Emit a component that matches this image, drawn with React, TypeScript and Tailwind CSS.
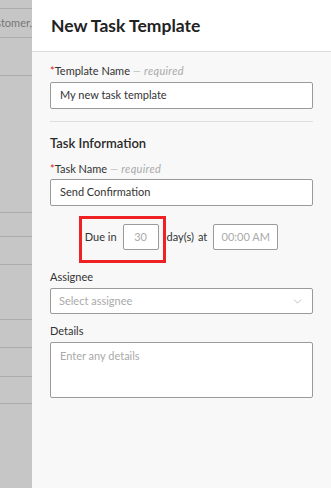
import React from "react";
import { ChevronDown } from "lucide-react";

const font = { fontFamily: "Lato, 'Open Sans', sans-serif" };

export default function App() {
  return (
    <div className="flex h-[488px] w-[331px] overflow-hidden" style={font}>
      {/* background list strip */}
      <div className="flex w-[32px] shrink-0 flex-col bg-[#c6c6c6]">
        <div className="h-[9px] border-b border-[#adadad]" />
        <div className="flex h-[29px] items-center justify-end overflow-hidden whitespace-nowrap border-b border-[#adadad] text-[11px] text-[#777]">
          customer,
        </div>
        <div className="h-[38px] border-b border-[#adadad]" />
        <div className="h-[137px] border-b border-[#adadad]" />
        <div className="h-[24px] border-b border-[#adadad]" />
        <div className="h-[28px] border-b border-[#adadad]" />
        <div className="h-[55px] border-b border-[#adadad]" />
        <div className="h-[28px] border-b border-[#adadad]" />
        <div className="h-[29px] border-b border-[#adadad]" />
        <div className="h-[27px] border-b border-[#adadad]" />
      </div>

      {/* side panel */}
      <div className="flex flex-1 flex-col bg-[#f8f8f8]">
        <div className="flex h-[52px] items-center border-b border-[#dcdcdc] bg-white pl-[19px] pt-[1px]">
          <h1 className="text-[17.5px] font-bold text-[#222]">New Task Template</h1>
        </div>

        <div className="flex flex-col px-[18px] pt-[12px]">
          <label className="h-[14px] text-[11px] leading-[14px] text-[#333]">
            <span className="text-[#d22]">*</span>Template Name{" "}
            <span className="italic tracking-[0.3px] text-[#aaa]">— required</span>
          </label>
          <div className="mt-[4px] flex h-[27px] items-center rounded-[2px] border border-[#9a9a9a] bg-white px-[9px] text-[11px] text-[#333]">
            My new task template
          </div>

          <div className="mt-[12px] h-px bg-[#dedede]" />

          <h2 className="mt-[12px] h-[18px] text-[13px] font-semibold leading-[18px] text-[#2a2a2a]">
            Task Information
          </h2>

          <label className="mt-[10px] h-[14px] text-[11px] leading-[14px] text-[#333]">
            <span className="text-[#d22]">*</span>Task Name{" "}
            <span className="italic tracking-[0.3px] text-[#aaa]">— required</span>
          </label>
          <div className="mt-[3px] flex h-[27px] items-center rounded-[2px] border border-[#9a9a9a] bg-white px-[9px] text-[11px] text-[#333]">
            Send Confirmation
          </div>

          <div className="relative mt-[18px] flex h-[26px] items-center justify-center text-[11px] text-[#333]">
            <span>Due in</span>
            <div className="ml-[6px] flex h-[26px] w-[36px] items-center justify-center rounded-[2px] border border-[#9a9a9a] bg-white text-[#aaa]">
              30
            </div>
            <span className="ml-[8px]">day(s)</span>
            <span className="ml-[4px]">at</span>
            <div className="ml-[6px] flex h-[26px] w-[65px] items-center justify-center rounded-[2px] border border-[#9a9a9a] bg-white text-[#aaa]">
              00:00 AM
            </div>
            <div className="pointer-events-none absolute left-[29px] top-[-8px] h-[47px] w-[87px] border-[3px] border-[#ee2222]" />
          </div>

          <label className="mt-[20px] h-[14px] text-[11px] leading-[14px] text-[#333]">Assignee</label>
          <div className="mt-[4px] flex h-[26px] items-center justify-between rounded-[2px] border border-[#9a9a9a] bg-white pl-[8px] pr-[8px] text-[11px] text-[#aaa]">
            <span>Select assignee</span>
            <ChevronDown size={13} strokeWidth={1.3} color="#aaa" />
          </div>

          <label className="mt-[10px] h-[14px] text-[11px] leading-[14px] text-[#333]">Details</label>
          <div className="mt-[4px] h-[56px] rounded-[2px] border border-[#9a9a9a] bg-white px-[9px] pt-[6px] text-[11px] leading-[14px] text-[#aaa]">
            Enter any details
          </div>
        </div>
      </div>
    </div>
  );
}
